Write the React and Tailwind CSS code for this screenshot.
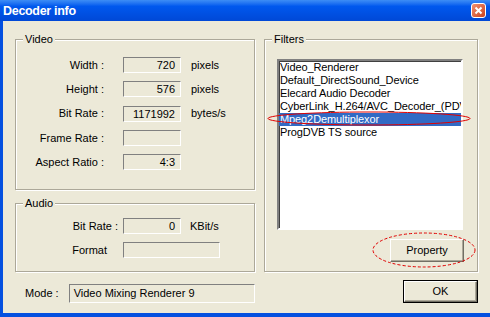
import React from "react";

const filters = [
  "Video_Renderer",
  "Default_DirectSound_Device",
  "Elecard Audio Decoder",
  "CyberLink_H.264/AVC_Decoder_(PDVD8)",
  "Mpeg2Demultiplexor",
  "ProgDVB TS source",
];

function Field({ value, className }) {
  return (
    <div
      className={`h-[16px] border border-t-[#808080] border-l-[#808080] border-r-white border-b-white pr-[5px] text-right leading-[14px] ${className}`}
    >
      {value}
    </div>
  );
}

function Group({ title, className, children }) {
  return (
    <div
      className={`relative border border-[#ACA899] shadow-[inset_1px_1px_0_#fff,1px_1px_0_#fff] ${className}`}
    >
      <span className="absolute -top-[7px] left-[7px] bg-[#ECE9D8] px-[2px] leading-[13px]">{title}</span>
      {children}
    </div>
  );
}

function VideoRow({ label, value, unit }) {
  return (
    <div className="flex h-[16px] items-center whitespace-nowrap">
      <span className="w-[88px] text-right">{label}</span>
      <Field value={value} className="ml-[19px] w-[58px]" />
      {unit && <span className="ml-[10px]">{unit}</span>}
    </div>
  );
}

function Button({ children, isDefault, className }) {
  const face = (
    <div className="flex h-full w-full items-center justify-center border border-t-white border-l-white border-r-[#716F64] border-b-[#716F64] bg-[#ECE9D8] shadow-[inset_-1px_-1px_0_#ACA899]">
      {children}
    </div>
  );
  return (
    <div className={`h-[23px] ${isDefault ? "border border-black" : ""} ${className}`}>{face}</div>
  );
}

export default function App() {
  return (
    <div className="relative h-[317px] w-[490px] overflow-hidden font-['Liberation_Sans',Arial,sans-serif] text-[11px] text-black">
      <div className="flex h-[21px] items-center justify-between bg-linear-to-b from-[#3D8DF5] via-[#0058EE] via-30% to-[#0048D6] pl-[3px] pr-[4px]">
        <span className="text-[12.5px] font-bold text-white leading-[14px] tracking-[-0.3px]">Decoder info</span>
        <div className="flex h-[15px] w-[15px] items-center justify-center rounded-[3px] border border-white bg-linear-to-br from-[#F09070] to-[#C9401A]">
          <svg width="9" height="9" viewBox="0 0 9 9">
            <path d="M1.5 1.5 L7.5 7.5 M7.5 1.5 L1.5 7.5" stroke="#fff" strokeWidth="2" />
          </svg>
        </div>
      </div>

      <div className="flex h-[296px] border-b-[4px] border-l-[3px] border-[#0450E0] bg-[#ECE9D8] pl-[12px] pt-[18px]">
        <div className="flex w-[240px] flex-col">
          <Group title="Video" className="h-[151px] pt-[17px]">
            <div className="flex flex-col gap-[8.25px]">
              <VideoRow label="Width :" value="720" unit="pixels" />
              <VideoRow label="Height :" value="576" unit="pixels" />
              <VideoRow label="Bit Rate :" value="1171992" unit="bytes/s" />
              <VideoRow label="Frame Rate :" value="" />
              <VideoRow label="Aspect Ratio :" value="4:3" />
            </div>
          </Group>

          <Group title="Audio" className="mt-[13px] h-[69px] pt-[14px]">
            <div className="flex flex-col gap-[8px] whitespace-nowrap">
              <div className="flex h-[16px] items-center">
                <span className="w-[107px] pr-[5px] text-right">Bit Rate :</span>
                <Field value="0" className="w-[58px]" />
                <span className="ml-[9px]">KBit/s</span>
              </div>
              <div className="flex h-[16px] items-center">
                <span className="w-[107px] pr-[16px] text-right">Format</span>
                <Field value="" className="w-[97px]" />
              </div>
            </div>
          </Group>

          <div className="mt-[12px] flex h-[19px] items-center whitespace-nowrap">
            <span className="ml-[10px]">Mode :</span>
            <div className="ml-[10px] flex h-[19px] w-[187px] items-center border border-t-[#808080] border-l-[#808080] border-r-white border-b-white pl-[4px]">
              Video Mixing Renderer 9
            </div>
          </div>
        </div>

        <div className="ml-[9px] flex w-[214px] flex-col">
          <Group title="Filters" className="flex h-[233px] flex-col">
            <div className="ml-[12px] mt-[19px] h-[171px] w-[186px] overflow-hidden border-2 border-t-[#808080] border-l-[#808080] border-r-white border-b-white bg-white shadow-[inset_1px_1px_0_#404040] tracking-[-0.1px]">
              {filters.map((f, i) => (
                <div
                  key={f}
                  className={`h-[13px] overflow-hidden whitespace-nowrap pl-[1px] leading-[13px] ${
                    i === 4 ? "bg-[#316AC5] text-white" : ""
                  }`}
                >
                  {f}
                </div>
              ))}
            </div>
            <Button className="mr-[13px] mt-[9px] w-[74px] self-end">Property</Button>
          </Group>
          <Button isDefault className="mt-[8px] w-[75px] self-end">
            OK
          </Button>
        </div>
      </div>

      <svg className="pointer-events-none absolute left-0 top-0" width="490" height="317">
        <ellipse cx="369" cy="118.5" rx="101" ry="6.5" fill="none" stroke="#E00000" strokeWidth="1" />
        <ellipse cx="424" cy="250" rx="51" ry="17" fill="none" stroke="#E00000" strokeWidth="1" strokeDasharray="3 2" />
      </svg>
    </div>
  );
}
